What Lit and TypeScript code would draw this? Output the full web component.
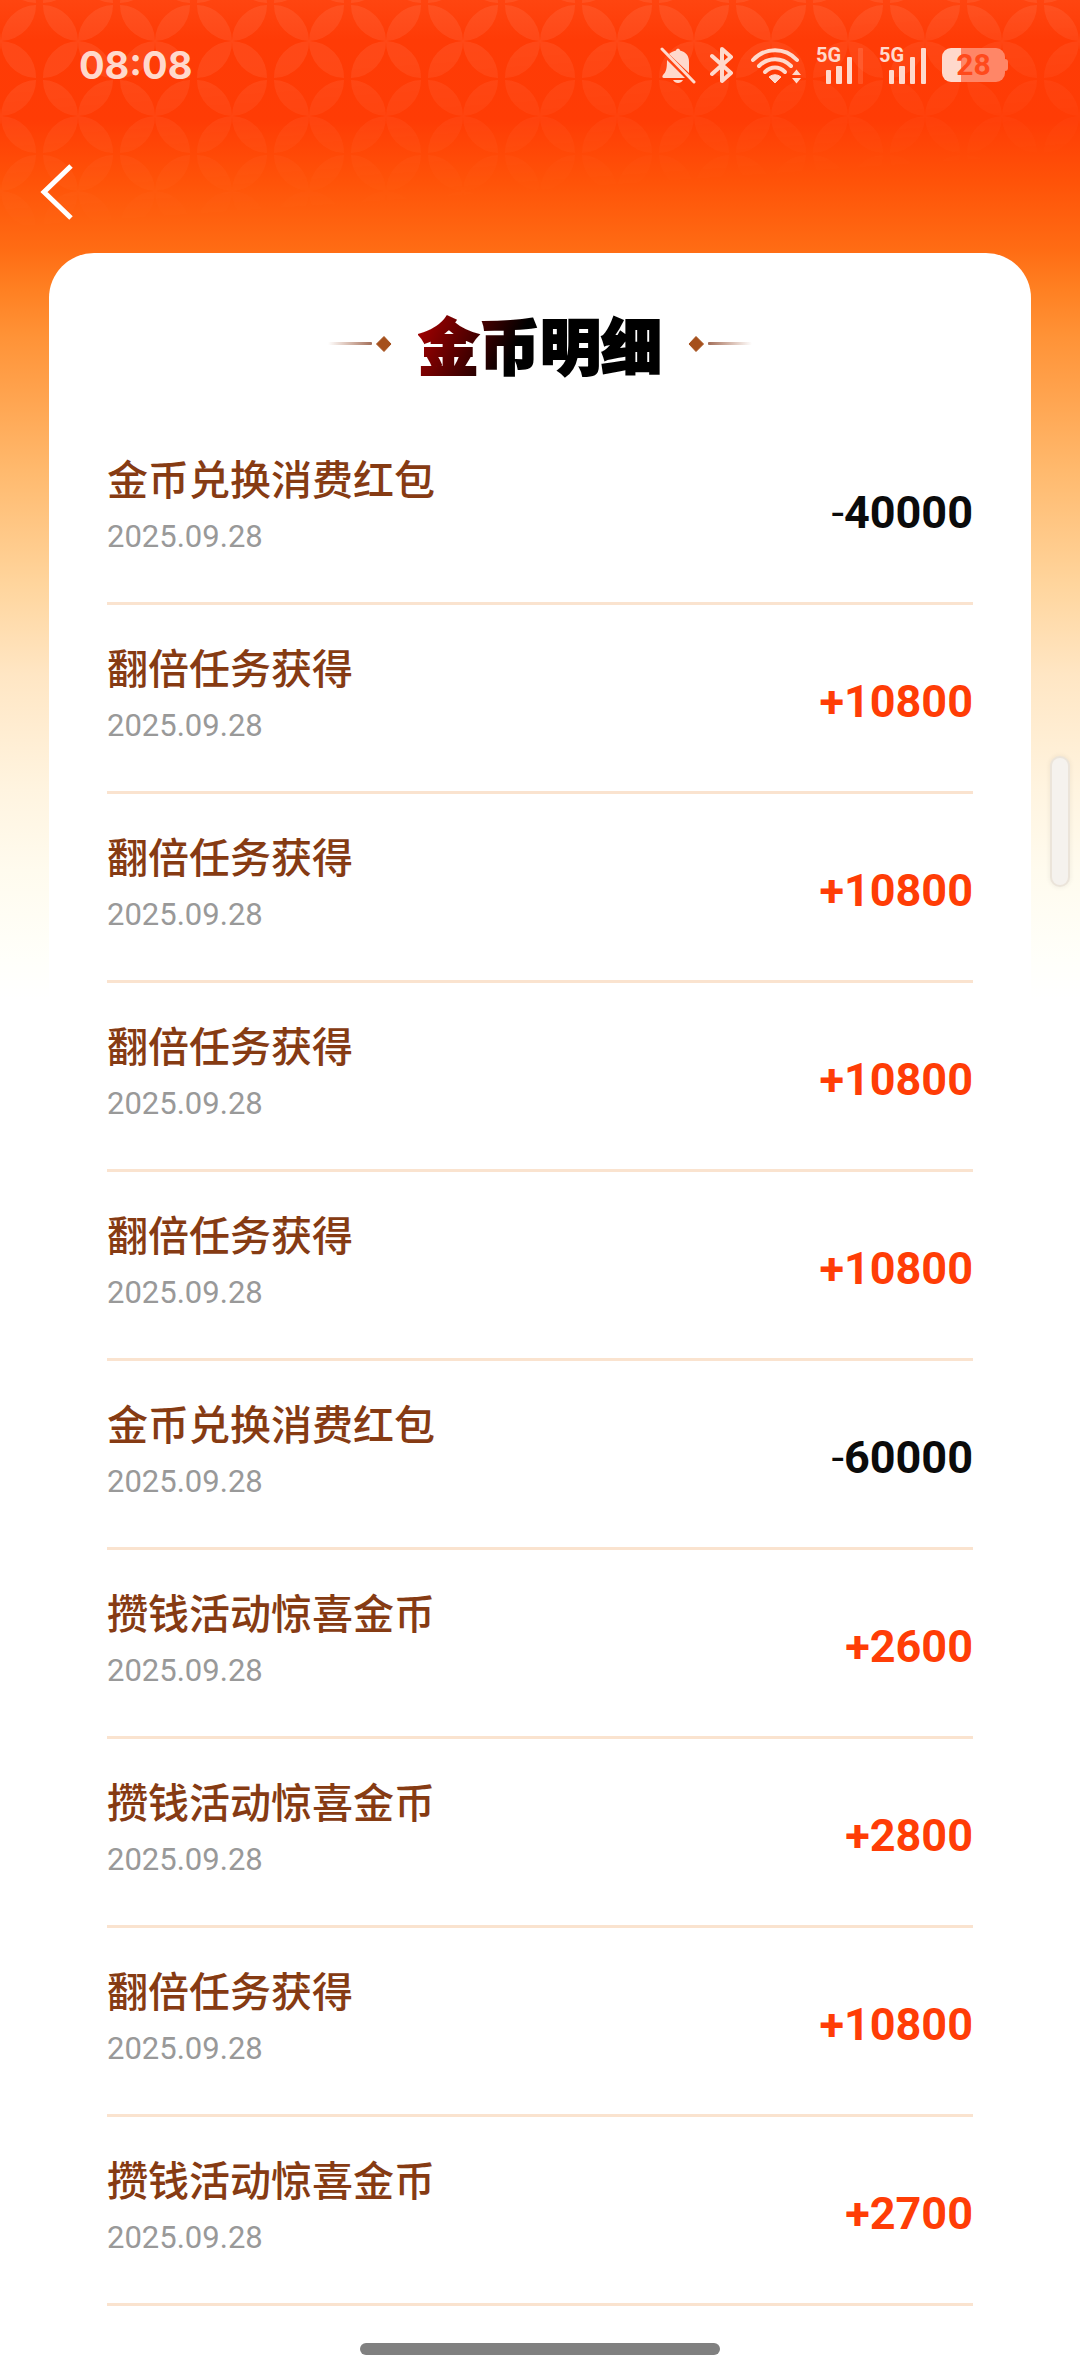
import { LitElement, html, css, svg } from "lit";
import { customElement } from "lit/decorators.js";

interface Entry {
  title: string;
  date: string;
  amount: number;
}

const entries: Entry[] = [
  { title: "金币兑换消费红包", date: "2025.09.28", amount: -40000 },
  { title: "翻倍任务获得", date: "2025.09.28", amount: 10800 },
  { title: "翻倍任务获得", date: "2025.09.28", amount: 10800 },
  { title: "翻倍任务获得", date: "2025.09.28", amount: 10800 },
  { title: "翻倍任务获得", date: "2025.09.28", amount: 10800 },
  { title: "金币兑换消费红包", date: "2025.09.28", amount: -60000 },
  { title: "攒钱活动惊喜金币", date: "2025.09.28", amount: 2600 },
  { title: "攒钱活动惊喜金币", date: "2025.09.28", amount: 2800 },
  { title: "翻倍任务获得", date: "2025.09.28", amount: 10800 },
  { title: "攒钱活动惊喜金币", date: "2025.09.28", amount: 2700 },
];

@customElement("status-bar")
class StatusBar extends LitElement {
  static styles = css`
    :host {
      display: flex;
      align-items: center;
      justify-content: space-between;
      height: 130px;
      padding: 0 72px 0 79px;
      color: #ffd9cc;
      font-family: Inter, "Noto Sans", sans-serif;
    }
    .time {
      font-size: 38px;
      line-height: 48px;
      font-weight: 700;
    }
    .icons {
      display: flex;
      align-items: center;
    }
    .icons svg {
      display: block;
      fill: currentColor;
    }
    .bell { margin-right: 14px; }
    .bluetooth { margin-right: 16px; }
    .wifi { margin-right: 14px; }
    .signal {
      display: grid;
      margin-right: 15px;
    }
    .signal svg,
    .network {
      grid-area: 1 / 1;
    }
    .network {
      font-family: Roboto, sans-serif;
      font-size: 20px;
      line-height: 16px;
      font-weight: 700;
    }
    .battery {
      display: flex;
      align-items: center;
    }
    .level {
      display: flex;
      align-items: center;
      justify-content: center;
      width: 63px;
      height: 34px;
      border-radius: 9px;
      background: linear-gradient(90deg, #ffd9cc 30%, #ff8667 30%);
      color: #ff4a1c;
      font-family: Roboto, sans-serif;
      font-size: 30px;
      line-height: 34px;
      font-weight: 700;
    }
    .cap {
      width: 3px;
      height: 12px;
      border-radius: 0 3px 3px 0;
      background: #ff8667;
    }
  `;

  private signal(weak: boolean) {
    return html`
      <div class="signal">
        <svg width="48" height="37" viewBox="0 0 48 37" aria-hidden="true">
          <rect x="10" y="23" width="5" height="14" rx="1" />
          <rect x="20" y="19" width="6" height="18" rx="1" />
          <rect x="31" y="10" width="5" height="27" rx="1" />
          <rect x="42" y="1" width="5" height="36" rx="1" opacity=${weak ? "0.15" : "1"} />
        </svg>
        <span class="network">5G</span>
      </div>
    `;
  }

  render() {
    return html`
      <div class="time">08:08</div>
      <div class="icons">
        <svg class="bell" width="36" height="37" viewBox="0 0 36 37" aria-hidden="true">
          <path d="M9 7 C11 5 14 4 16 3.500 C16 1 20 1 20 3.500 C26 5 29 9 29 15 L29 26 Z" />
          <path d="M7 13 L25 31 L4 31 C2 31 2 29 3 28 C6 25 7 22 7 13 Z" />
          <path d="M13 33 H23 C21 37 15 37 13 33 Z" />
          <path d="M2 2 L34 35" fill="none" stroke="currentColor" stroke-width="3" stroke-linecap="round" />
        </svg>
        <svg class="bluetooth" width="24" height="38" viewBox="0 0 24 38" aria-hidden="true">
          <path
            d="M2 10 L21 27 L12 35 V3 L21 11 L2 28"
            fill="none"
            stroke="currentColor"
            stroke-width="4"
            stroke-linejoin="round"
            stroke-linecap="round"
          />
        </svg>
        <svg class="wifi" width="52" height="37" viewBox="0 0 52 37" aria-hidden="true">
          <g fill="none" stroke="currentColor" stroke-width="4" stroke-linecap="round">
            <path d="M3 13 C15 0 35 0 47 13" />
            <path d="M9 19 C18 10 32 10 41 19" />
            <path d="M15 25 C21 19 29 19 35 25" />
          </g>
          <path d="M19 30 C23 27 27 27 31 30 L25 36 Z" stroke="currentColor" stroke-linejoin="round" />
          <path d="M42 28 L46.500 22.500 L51 28 Z M42 31 L51 31 L46.500 36.500 Z" />
        </svg>
        ${this.signal(true)} ${this.signal(false)}
        <div class="battery">
          <div class="level">28</div>
          <div class="cap"></div>
        </div>
      </div>
    `;
  }
}

@customElement("coin-entry")
class CoinEntry extends LitElement {
  static properties = { entry: { attribute: false } };
  declare entry: Entry;

  static styles = css`
    :host {
      display: flex;
      align-items: center;
      justify-content: space-between;
      box-sizing: border-box;
      height: 189px;
      padding-bottom: 4px;
      border-bottom: 3px solid #fae3cf;
      font-family: "Noto Sans CJK SC", sans-serif;
    }
    .title {
      margin-bottom: 4px;
      color: #863b13;
      font-size: 41px;
      line-height: 56px;
      font-weight: 500;
    }
    .date {
      color: #999;
      font-family: "DIN Alternate", Roboto, sans-serif;
      font-size: 31px;
      line-height: 56px;
    }
    .amount {
      margin-top: 12px;
      color: #ff3d06;
      font-family: "DIN Alternate", Roboto, sans-serif;
      font-size: 45px;
      line-height: 56px;
      font-weight: 700;
    }
    .spent {
      color: #0b0b0b;
    }
    .minus {
      font-weight: 400;
    }
  `;

  render() {
    const { title, date, amount } = this.entry;
    const spent = amount < 0;
    const sign = spent ? html`<span class="minus">-</span>` : "+";
    return html`
      <div>
        <div class="title">${title}</div>
        <div class="date">${date}</div>
      </div>
      <div class="amount ${spent ? "spent" : ""}">${sign}${Math.abs(amount)}</div>
    `;
  }
}

@customElement("app-root")
class AppRoot extends LitElement {
  static styles = css`
    :host {
      display: block;
      position: relative;
      min-height: 100vh;
      overflow: hidden;
      background: linear-gradient(
        #ff4510 0,
        #ff3b06 40px,
        #ff3c05 120px,
        #ff5208 180px,
        #ff6c14 250px,
        #ff8022 290px,
        #ff9236 335px,
        #ffb96d 470px,
        #ffd59d 585px,
        #ffe6c4 675px,
        #fff4e0 790px,
        #fffbee 870px,
        #fffffa 960px,
        #fff 1000px
      );
    }
    .pattern {
      position: absolute;
      inset: 0 0 auto;
      width: 100%;
      height: 230px;
      mask-image: linear-gradient(176deg, #000 80px, transparent 240px);
    }
    .page {
      position: relative;
      display: flex;
      flex-direction: column;
    }
    .nav {
      display: flex;
      height: 123px;
      padding: 0 32px;
      align-items: center;
    }
    .back {
      display: flex;
      padding: 8px;
      border: 0;
      background: none;
      cursor: pointer;
    }
    .card {
      margin: 0 49px;
      padding: 55px 58px 20px;
      border-radius: 45px 45px 0 0;
      background: #fff;
    }
    .heading {
      display: flex;
      align-items: center;
      justify-content: center;
      gap: 26px;
      height: 72px;
    }
    .heading svg {
      display: block;
    }
    h1 {
      margin: 0;
      background: linear-gradient(115deg, #a00000 4%, #500 22%, #000 42%);
      background-clip: text;
      -webkit-text-stroke: 2px transparent;
      color: transparent;
      font-family: "Noto Sans CJK SC", sans-serif;
      font-size: 61px;
      line-height: 72px;
      font-weight: 900;
    }
    .flip {
      transform: scaleX(-1);
    }
    ul {
      margin: 36px 0 0;
      padding: 0;
      list-style: none;
    }
    .handle {
      position: absolute;
      top: 758px;
      right: 12px;
      width: 16px;
      height: 127px;
      border-radius: 8px;
      background: #f5f2ee;
      box-shadow: 0 0 0 2px #ebe4da, 0 0 4px 3px #0000000d;
    }
    .home {
      position: absolute;
      bottom: 21px;
      left: 50%;
      width: 360px;
      height: 12px;
      margin-left: -180px;
      border-radius: 6px;
      background: #808080;
    }
  `;

  private ornament(side: string, flipped: boolean) {
    return html`
      <svg class=${flipped ? "flip" : ""} width="66" height="18" viewBox="0 0 66 18" aria-hidden="true">
        ${svg`
          <defs>
            <linearGradient id=${side}>
              <stop offset="0" stop-color="#a0522d" stop-opacity="0" />
              <stop offset="1" stop-color="#8b4a30" stop-opacity="0.8" />
            </linearGradient>
          </defs>
          <rect x="2" y="7" width="44" height="3" rx="1" fill="url(#${side})" />
          <path d="M58 1.500 L65 9 L58 16.500 L50.500 9 Z" fill="#a5501c" stroke="#a5501c" stroke-linejoin="round" />
        `}
      </svg>
    `;
  }

  render() {
    return html`
      <svg class="pattern" aria-hidden="true">
        <defs>
          <pattern id="petals" x="40" y="4" width="77" height="75" patternUnits="userSpaceOnUse">
            <path
              fill="#fff"
              fill-opacity="0.07"
              d="M38 37 A36 36 0 0 0 73 1 A36 36 0 0 0 38 37 Z
                 M38 37 A36 36 0 0 0 3 1 A36 36 0 0 0 38 37 Z
                 M38 37 A36 36 0 0 0 73 74 A36 36 0 0 0 38 37 Z
                 M38 37 A36 36 0 0 0 3 74 A36 36 0 0 0 38 37 Z"
            />
          </pattern>
        </defs>
        <rect width="100%" height="100%" fill="url(#petals)" />
      </svg>
      <div class="page">
        <status-bar></status-bar>
        <nav class="nav">
          <button class="back" type="button" aria-label="返回">
            <svg width="34" height="56" viewBox="0 0 34 56" aria-hidden="true">
              <path d="M31 2 L4 28 L31 54" fill="none" stroke="#fff" stroke-width="5" />
            </svg>
          </button>
        </nav>
        <main class="card">
          <div class="heading">
            ${this.ornament("left", false)}
            <h1>金币明细</h1>
            ${this.ornament("right", true)}
          </div>
          <ul>
            ${entries.map((entry) => html`<li><coin-entry .entry=${entry}></coin-entry></li>`)}
          </ul>
        </main>
      </div>
      <div class="handle"></div>
      <div class="home"></div>
    `;
  }
}
